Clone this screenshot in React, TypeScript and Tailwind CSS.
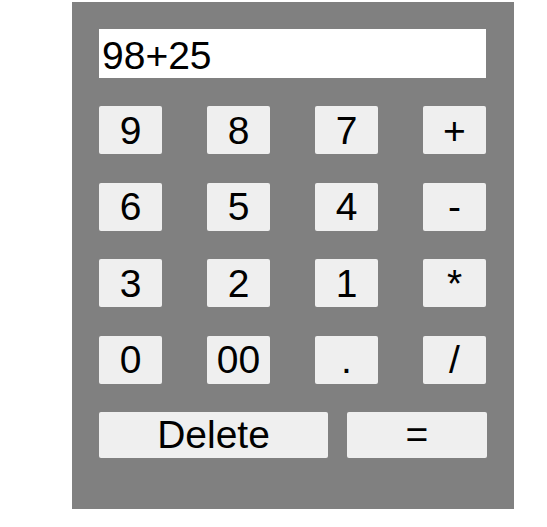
const keys = ["9", "8", "7", "+", "6", "5", "4", "-", "3", "2", "1", "*", "0", "00", ".", "/"];

const btn =
  "bg-[#efefef] rounded-[2px] flex items-center justify-center text-black leading-none";

export default function App() {
  return (
    <div className="min-h-[527px] bg-white font-['Liberation_Sans',Arial,sans-serif]">
      <div className="ml-[72px] pt-[2px]">
        <div className="w-[442px] h-[507px] bg-[#808080] pl-[27px] pt-[27px]">
          <div className="w-[387px] h-[49px] bg-white flex items-center pl-[3px] pt-[3px] text-[39px] leading-none text-black">
            98+25
          </div>
          <div className="mt-[28px] grid grid-cols-[repeat(4,63px)] gap-x-[45px] gap-y-[28.67px] auto-rows-[48px]">
            {keys.map((k) => (
              <div key={k} className={`${btn} text-[39px]`}>
                {k}
              </div>
            ))}
          </div>
          <div className="mt-[28px] flex gap-[19px] w-[388px]">
            <div className={`${btn} w-[229px] h-[46px] text-[39px]`}>Delete</div>
            <div className={`${btn} w-[140px] h-[46px] text-[39px]`}>=</div>
          </div>
        </div>
      </div>
    </div>
  );
}
